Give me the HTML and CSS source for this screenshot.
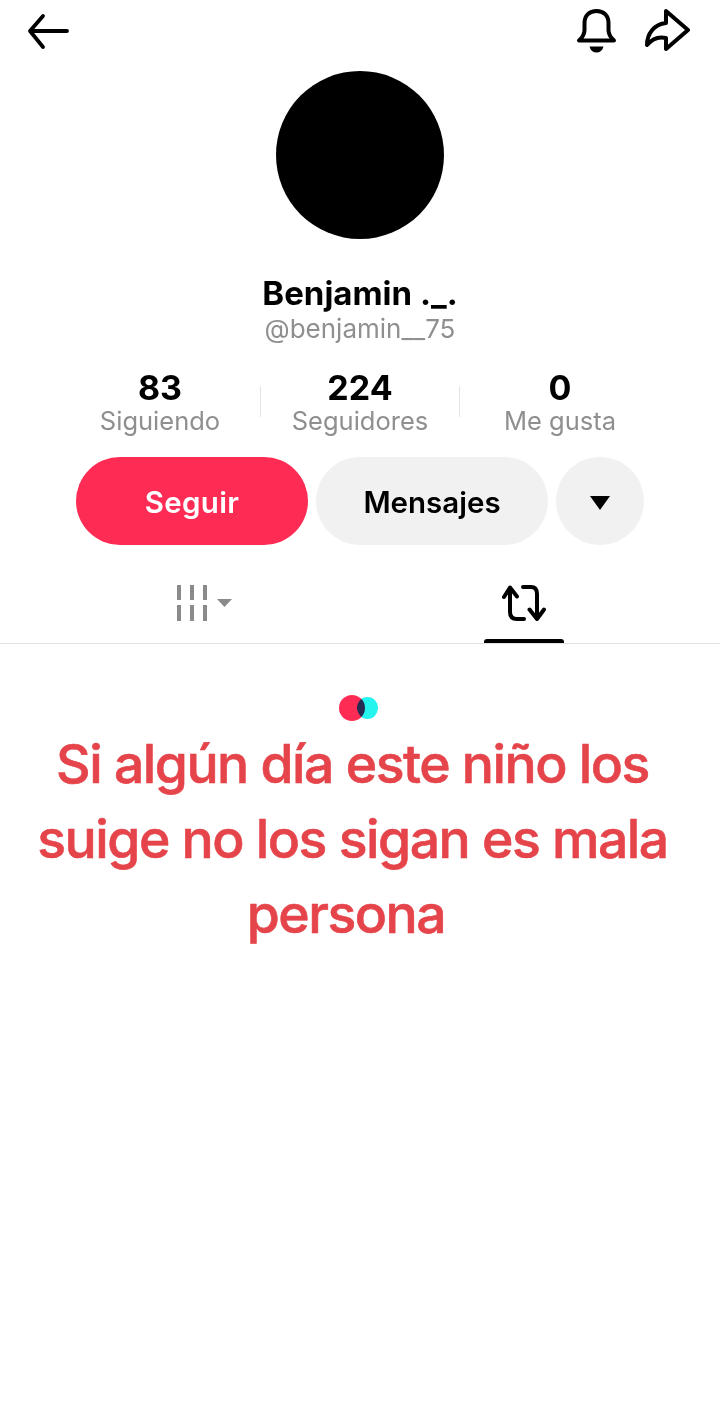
FILE: index.html
```html
<!DOCTYPE html>
<html lang="es">
<head>
<meta charset="utf-8">
<title>Benjamin ._.</title>
<link rel="stylesheet" href="styles.css">
</head>
<body>
<main class="page">
  <header class="topbar">
    <svg class="icon-back" width="44" height="40" viewBox="0 0 44 40" fill="none" stroke="#000" stroke-width="3.8" stroke-linecap="round" stroke-linejoin="round"><path d="M4 20H41M17 5 4 20 17 36"/></svg>
    <div class="topbar-actions">
      <svg width="42" height="46" viewBox="0 0 42 46" fill="none" stroke="#000" stroke-width="4" stroke-linecap="round" stroke-linejoin="round"><path d="M3 32.500H38C34 29 32.500 25.500 32.500 22V15C32.500 7.500 27.500 3 20.500 3S8.500 7.500 8.500 15V22C8.500 25.500 7 29 3 32.500Z"/><path d="M13.500 38.500H27.500C26.500 42.500 24 44.500 20.500 44.500S14.500 42.500 13.500 38.500Z" fill="#000" stroke="none"/></svg>
      <svg width="46" height="44" viewBox="0 0 46 44" fill="none" stroke="#000" stroke-width="4" stroke-linejoin="round" stroke-linecap="round"><path d="M22 3 44 22 22 41V30C14 28 8 31 3 37 3 26 10 16 22 15Z"/></svg>
    </div>
  </header>

  <section class="profile">
    <div class="avatar"></div>
    <h1 class="name">Benjamin ._.</h1>
    <p class="handle">@benjamin__75</p>
    <div class="stats">
      <div class="stat"><strong>83</strong><span>Siguiendo</span></div>
      <div class="stat stat-mid"><strong>224</strong><span>Seguidores</span></div>
      <div class="stat"><strong>0</strong><span>Me gusta</span></div>
    </div>
    <div class="actions">
      <button class="btn btn-primary">Seguir</button>
      <button class="btn btn-muted">Mensajes</button>
      <button class="btn btn-more" aria-label="Más"><span class="caret"></span></button>
    </div>
  </section>

  <nav class="tabs">
    <div class="tab">
      <svg width="56" height="38" viewBox="0 0 56 38" fill="#8a8a8a"><path d="M1 0H5V15H1ZM14 0H18V15H14ZM27 0H31V15H27ZM1 20H5V36H1ZM14 20H18V36H14ZM27 20H31V36H27ZM41 14H56L48.500 22Z"/></svg>
    </div>
    <div class="tab tab-active">
      <svg width="44" height="38" viewBox="0 0 44 38" fill="none" stroke="#000" stroke-width="4" stroke-linecap="round" stroke-linejoin="round"><path d="M2 12 8 2.500 15 11.500M8 3V27C8 31.500 10.500 34 15 34H22M21 2H29C33 2 35 4.500 35 9V34M27.500 24.500 35 34 42 24.500"/></svg>
    </div>
  </nav>

  <section class="notice">
    <div class="dots"><span class="dot dot-red"></span><span class="dot dot-cyan"></span></div>
    <p class="message">Si algún día este niño los<br>suige no los sigan es mala<br><span class="last-line">persona</span></p>
  </section>
</main>
</body>
</html>
```
FILE: styles.css
```css
* { box-sizing: border-box; }
html, body { margin: 0; padding: 0; background: #fff; }
body { font-family: Inter, "Liberation Sans", sans-serif; color: #000; }
.page { width: 720px; height: 1420px; overflow: hidden; }

.topbar { display: flex; justify-content: space-between; align-items: flex-start; height: 71px; padding: 8px 30px 0 26px; }
.icon-back { margin-top: 3px; }
.topbar-actions { display: flex; gap: 26px; align-items: flex-start; }

.profile { display: flex; flex-direction: column; align-items: center; }
.avatar { width: 168px; height: 168px; border-radius: 50%; background: #000; }
.name { margin: 33px 0 0; font-size: 33px; line-height: 42px; font-weight: 700; }
.handle { margin: 0; font-size: 26px; line-height: 30px; color: #8f8f8f; font-weight: 400; }

.stats { display: flex; justify-content: center; margin-top: 26px; width: 600px; }
.stat { display: flex; flex-direction: column; align-items: center; width: 200px; }
.stat strong { font-size: 34px; line-height: 35px; font-weight: 700; }
.stat span { font-size: 25.5px; line-height: 31px; color: #8f8f8f; }
.stat-mid { position: relative; }
.stat-mid::before, .stat-mid::after { content: ""; position: absolute; top: 16px; width: 1px; height: 31px; background: #e3e3e3; }
.stat-mid::before { left: 0; }
.stat-mid::after { right: 0; }

.actions { display: flex; gap: 8px; margin-top: 21px; }
.btn { height: 88px; border: 0; border-radius: 44px; font-family: inherit; font-size: 29.5px; font-weight: 600; padding: 1px 0 0; display: flex; align-items: center; justify-content: center; }
.btn-primary { width: 232px; background: #fe2c55; color: #fff; letter-spacing: 0.3px; }
.btn-muted { width: 232px; background: #f1f1f2; color: #000; }
.btn-more { width: 88px; background: #f1f1f2; }
.caret { width: 0; height: 0; margin-top: 3px; border-left: 10px solid transparent; border-right: 10px solid transparent; border-top: 14px solid #000; }

.tabs { display: flex; height: 98px; margin-top: 1px; padding: 0 36px 0 44px; border-bottom: 1px solid #e2e2e2; }
.tab { flex: 1; display: flex; justify-content: center; align-items: flex-start; padding-top: 39px; position: relative; }
.tab-active::after { content: ""; position: absolute; left: 120px; bottom: 0; width: 80px; height: 4px; background: #000; border-radius: 3px 3px 0 0; }

.notice { display: flex; flex-direction: column; align-items: center; padding: 51px 15px 0 0; }
.dots { display: flex; height: 26px; align-items: center; margin-left: 12px; }
.dot { display: block; border-radius: 50%; }
.dot-red { width: 26px; height: 26px; background: #fe2c55; position: relative; z-index: 1; mix-blend-mode: multiply; }
.dot-cyan { width: 21px; height: 22px; background: #25f4ee; margin-left: -8px; mix-blend-mode: multiply; }
.message { margin: 5px 0 0; width: 700px; text-align: center; font-size: 53.5px; line-height: 75px; font-weight: 500; letter-spacing: -1.5px; color: #e5444a; -webkit-text-stroke: 0.6px #e5444a; }
.last-line { display: inline-block; padding-right: 13px; }
```
